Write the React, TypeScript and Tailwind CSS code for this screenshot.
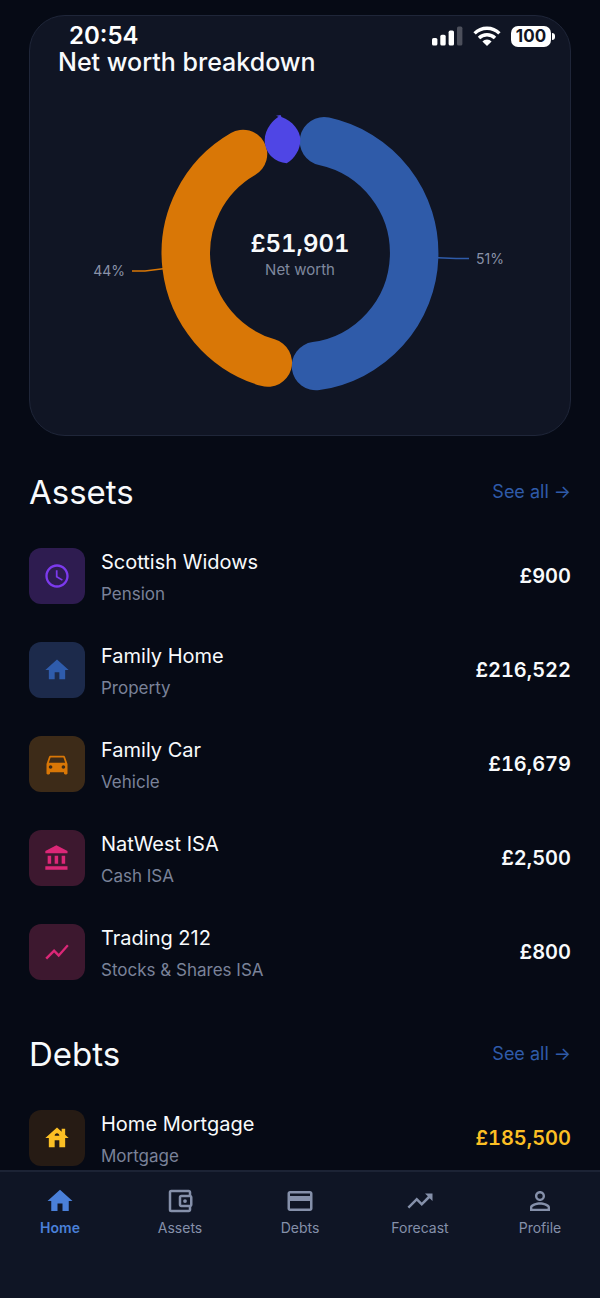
import React from 'react';
import {
  MdCreditCard,
  MdDirectionsCar,
  MdHome,
  MdHouse,
  MdOutlineAccountBalanceWallet,
  MdPersonOutline,
  MdSchedule,
  MdShowChart,
  MdTrendingUp,
} from 'react-icons/md';

type Icon = React.ComponentType<{ size?: number }>;

interface Item {
  name: string;
  type: string;
  amount: string;
  icon: Icon;
  tile: string;
}

const BankIcon: Icon = ({ size = 24 }) => (
  <svg width={size} height={size} viewBox="0 0 24 24" fill="currentColor" aria-hidden="true">
    <path d="M11.5 1L2 6v2h19V6zM4 10v7h3v-7zm6 0v7h3v-7zm6 0v7h3v-7zM2 19v3h19v-3z" />
  </svg>
);

const assets: Item[] = [
  { name: 'Scottish Widows', type: 'Pension', amount: '£900', icon: MdSchedule, tile: 'bg-[#2e1c50] text-[#7c3aed]' },
  { name: 'Family Home', type: 'Property', amount: '£216,522', icon: MdHome, tile: 'bg-[#1c2a4b] text-[#2f5cac]' },
  { name: 'Family Car', type: 'Vehicle', amount: '£16,679', icon: MdDirectionsCar, tile: 'bg-[#3d2b18] text-[#d97706]' },
  { name: 'NatWest ISA', type: 'Cash ISA', amount: '£2,500', icon: BankIcon, tile: 'bg-[#3d182f] text-[#db2777]' },
  { name: 'Trading 212', type: 'Stocks & Shares ISA', amount: '£800', icon: MdShowChart, tile: 'bg-[#3d182f] text-[#db2777]' },
];

const debts: Item[] = [
  { name: 'Home Mortgage', type: 'Mortgage', amount: '£185,500', icon: MdHouse, tile: 'bg-[#261b14] text-[#fbbf24]' },
];

const tabs = [
  { label: 'Home', icon: MdHome, active: true },
  { label: 'Assets', icon: MdOutlineAccountBalanceWallet, active: false },
  { label: 'Debts', icon: MdCreditCard, active: false },
  { label: 'Forecast', icon: MdTrendingUp, active: false },
  { label: 'Profile', icon: MdPersonOutline, active: false },
];

const StatusBar: React.FC = () => (
  <div className="absolute inset-x-0 top-0 flex items-center justify-between pt-6 pl-[69px] pr-[45px] text-white">
    <span className="text-[24px] leading-6 font-semibold">20:54</span>
    <div className="flex items-center gap-2.5">
      <svg width="31" height="20" viewBox="0 0 31 20" fill="currentColor" aria-hidden="true">
        <rect x="0" y="12" width="5.4" height="7.6" rx="1.6" />
        <rect x="8.3" y="8.8" width="5.4" height="10.8" rx="1.6" />
        <rect x="16.6" y="4.6" width="5.4" height="15" rx="1.6" />
        <rect x="25" y="0.6" width="5.4" height="19" rx="1.6" opacity="0.25" />
      </svg>
      <svg width="28" height="20" viewBox="0 0 28 20" aria-hidden="true">
        <g fill="none" stroke="currentColor" strokeWidth="3.4">
          <path d="M1.6 7.4a17.6 17.6 0 0 1 24.8 0" />
          <path d="M6 12a11.4 11.4 0 0 1 16 0" />
        </g>
        <path fill="currentColor" d="M14 20l-4.6-4.6a6.5 6.5 0 0 1 9.2 0z" />
      </svg>
      <div className="flex items-center gap-px">
        <span className="flex h-[21px] w-10 items-center justify-center rounded-[7px] bg-white text-[17px] leading-5 font-bold text-[#101524]">
          100
        </span>
        <span className="h-[7px] w-[3px] rounded-r-full bg-white" />
      </div>
    </div>
  </div>
);

const BreakdownChart: React.FC = () => (
  <div className="grid place-items-center">
    <svg
      viewBox="-242 -145 484 290"
      className="col-start-1 row-start-1 w-full max-w-[484px]"
      role="img"
      aria-label="Net worth breakdown chart"
    >
      <g fill="none" strokeWidth="48.5" strokeLinecap="round">
        <path d="M24 -111.7A114.25 114.25 0 0 1 16 113.1" stroke="#2f5ba9" />
        <path d="M-32.2 109.6A114.25 114.25 0 0 1 -57 -99" stroke="#d97706" />
      </g>
      <path
        d="M-24 -137.2L-19.5 -138L-18.5 -136C-13 -134 -8 -130.5 -5 -126.5C-1.5 -122 0.3 -118 0.3 -113C0.3 -108 -1 -103.5 -3.3 -100C-6 -95.5 -9 -92 -13.3 -89.7C-19 -90.5 -24.5 -92.5 -28.3 -96.3C-33 -101 -35.3 -107 -35.3 -113C-35.3 -118.5 -33 -124 -30 -128C-27 -132 -25 -134 -21.5 -136.2Z"
        fill="#4f46e5"
      />
      <g fill="none" strokeWidth="1.4">
        <path d="M138 4.8L156 5.5H169" stroke="#2f5ba9" />
        <path d="M-137 15.8L-155 18H-168" stroke="#d97706" />
      </g>
      <g fill="#8a92a8" fontSize="14">
        <text x="176" y="11">51%</text>
        <text x="-175" y="23" textAnchor="end">44%</text>
      </g>
    </svg>
    <div className="col-start-1 row-start-1 pt-1.5 text-center">
      <p className="text-[24px] leading-7 font-semibold text-slate-50 tabular-nums">£51,901</p>
      <p className="text-[15px] leading-6 text-[#7f889e]">Net worth</p>
    </div>
  </div>
);

const Section: React.FC<{ title: string; items: Item[]; amountClass: string }> = ({ title, items, amountClass }) => (
  <section className="mb-[18px] pt-8 last:mb-0">
    <div className="flex items-center justify-between">
      <h2 className="text-[33px] leading-12 font-normal text-slate-50">{title}</h2>
      <a href="#" className="text-[18px] leading-6 text-[#2f5ba9]">See all →</a>
    </div>
    <ul className="flex flex-col gap-[38px] pt-8">
      {items.map(({ name, type, amount, icon: Icon, tile }) => (
        <li key={name} className="flex h-14 items-center">
          <span className={`flex size-14 shrink-0 items-center justify-center rounded-xl ${tile}`}>
            <Icon size={28} />
          </span>
          <div className="ml-4 flex-1 pt-1">
            <p className="text-[20px] leading-8 font-normal text-slate-50">{name}</p>
            <p className="text-[17px] leading-8 text-[#7a8299]">{type}</p>
          </div>
          <span className={`text-[20px] leading-8 font-semibold tabular-nums ${amountClass}`}>{amount}</span>
        </li>
      ))}
    </ul>
  </section>
);

const App: React.FC = () => {
  return (
    <div className="relative flex h-screen flex-col bg-[#060a15] font-['Inter',sans-serif]">
      <main className="min-h-0 flex-1 overflow-y-auto px-[29px] pt-[15px]">
        <section className="rounded-[36px] border border-[#1f2639] bg-[#101524] px-7 pt-7 pb-[37px]">
          <h1 className="pb-7 text-[25px] leading-9 font-medium text-slate-50">Net worth breakdown</h1>
          <BreakdownChart />
        </section>
        <Section title="Assets" items={assets} amountClass="text-slate-50" />
        <Section title="Debts" items={debts} amountClass="text-[#fbbf24]" />
      </main>

      <nav className="grid h-32 shrink-0 grid-cols-5 items-start border-t-2 border-[#1c2335] bg-[#0f1525] pt-3.5">
        {tabs.map(({ label, icon: Icon, active }) => (
          <button
            key={label}
            type="button"
            className={`flex flex-col items-center text-[14px] leading-6 ${active ? 'font-semibold text-[#4a80d9]' : 'text-[#8590aa]'}`}
          >
            <Icon size={30} />
            {label}
          </button>
        ))}
      </nav>

      <StatusBar />
    </div>
  );
};

export default App;
